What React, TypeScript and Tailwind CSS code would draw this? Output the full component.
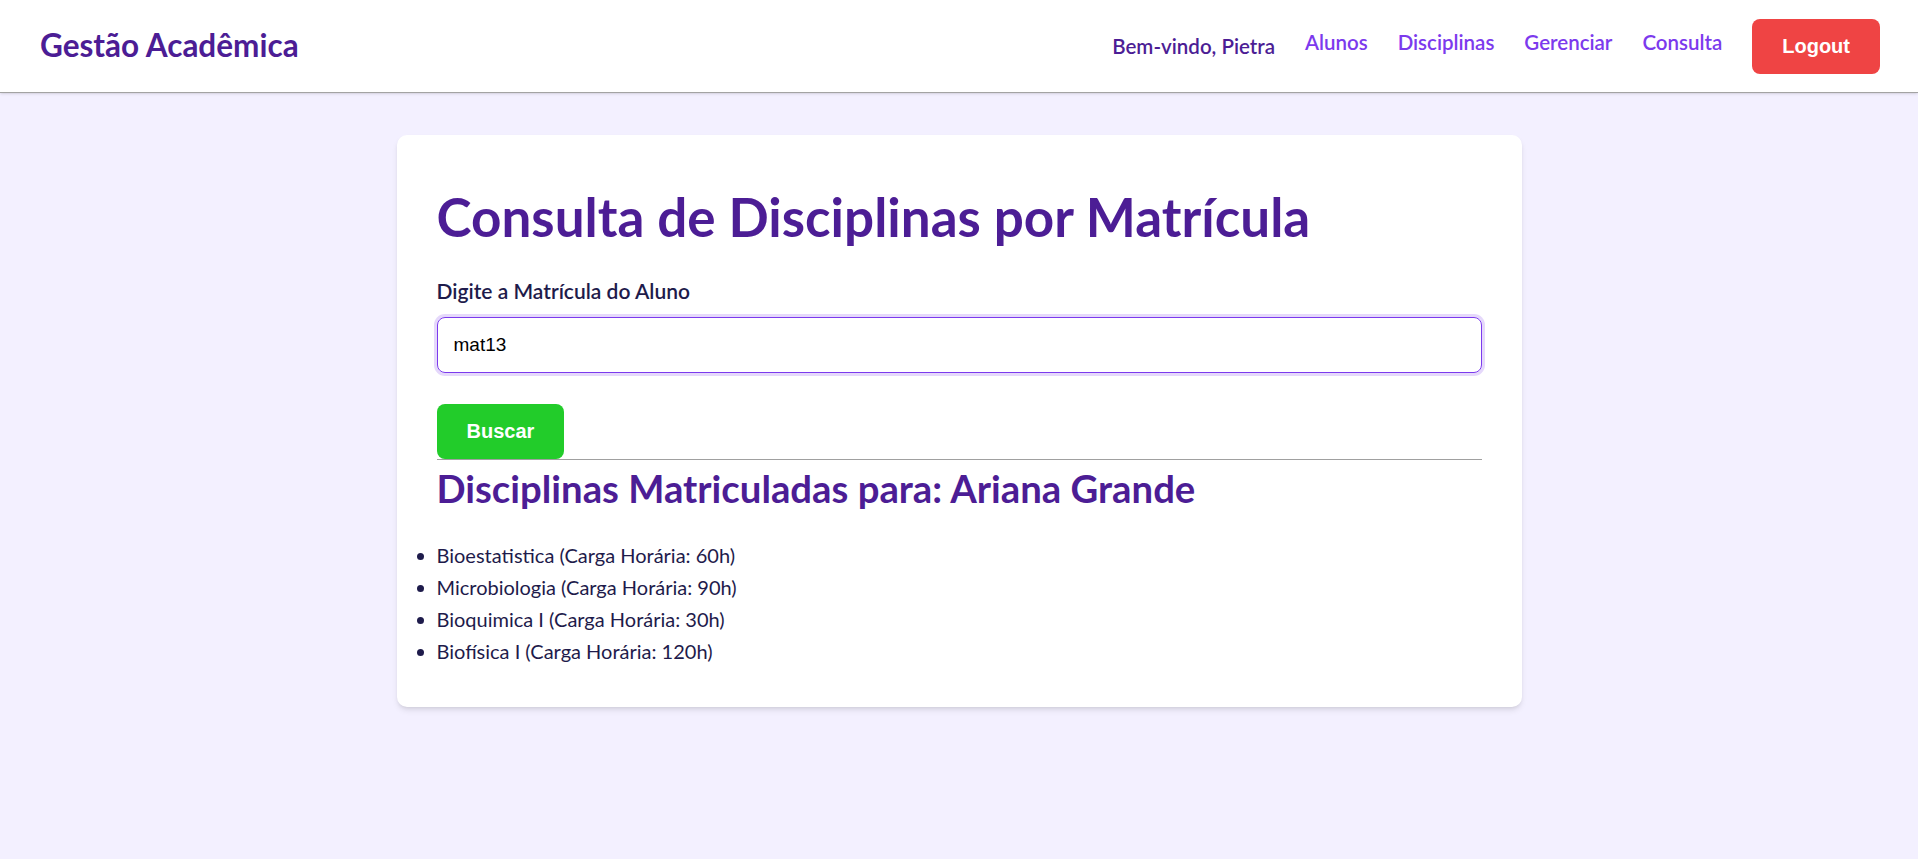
import { useState } from "react";

const disciplinas = [
  { nome: "Bioestatistica", carga: 60 },
  { nome: "Microbiologia", carga: 90 },
  { nome: "Bioquimica I", carga: 30 },
  { nome: "Biofísica I", carga: 120 },
];

export default function App() {
  const [matricula, setMatricula] = useState("mat13");

  return (
    <main className="min-h-screen bg-[#f3f0ff] font-['Lato',sans-serif]">
      <nav className="h-[93px] bg-white border-b border-[#a3a3a3] shadow-sm flex items-center justify-between pl-[40px] pr-[38px]">
        <h1 className="text-[31.5px] font-bold text-[#4c1d95]">Gestão Acadêmica</h1>
        <div className="flex items-center gap-[30px]">
          <span className="text-[20.5px] font-semibold text-[#4c1d95]">Bem-vindo, Pietra</span>
          {["Alunos", "Disciplinas", "Gerenciar", "Consulta"].map((l) => (
            <a key={l} href="#" className="text-[20.5px] font-semibold text-[#7c3aed] mb-2">
              {l}
            </a>
          ))}
          <button className="bg-[#ef4444] text-white font-bold text-[20px] leading-[23px] px-[30px] py-4 rounded-lg font-['Liberation_Sans',sans-serif]">
            Logout
          </button>
        </div>
      </nav>

      <div className="pt-[42px] pb-10">
        <div className="mx-auto w-[1125px] bg-white rounded-[10px] shadow-md p-10">
          <h2 className="mt-[10px] mb-[30px] text-[53px] font-bold text-[#4c1d95] leading-[1.2]">
            Consulta de Disciplinas por Matrícula
          </h2>
          <label className="block text-[21px] leading-[24px] font-semibold text-[#1e1b4b] mb-[14px]">
            Digite a Matrícula do Aluno
          </label>
          <input
            autoFocus
            value={matricula}
            onChange={(e) => setMatricula(e.target.value)}
            className="block w-full h-[56px] px-4 rounded-lg border border-[#7c3aed] ring-[3px] ring-[#7c3aed]/20 outline-none text-[19px] text-black font-['Liberation_Sans',sans-serif]"
          />
          <button className="mt-[31px] bg-[#22cc2a] text-white font-bold text-[20px] leading-[23px] px-[30px] py-4 rounded-lg font-['Liberation_Sans',sans-serif]">
            Buscar
          </button>
          <hr className="border-0 h-px bg-[#a0a0a0]" />
          <h3 className="mt-[6px] mb-[27px] text-[38.3px] leading-[1.2] font-bold text-[#4c1d95]">
            Disciplinas Matriculadas para: Ariana Grande
          </h3>
          <ul className="list-disc text-[20px] text-[#1e1b4b] leading-[32px]">
            {disciplinas.map((d) => (
              <li key={d.nome}>
                {d.nome} (Carga Horária: {d.carga}h)
              </li>
            ))}
          </ul>
        </div>
      </div>
    </main>
  );
}
